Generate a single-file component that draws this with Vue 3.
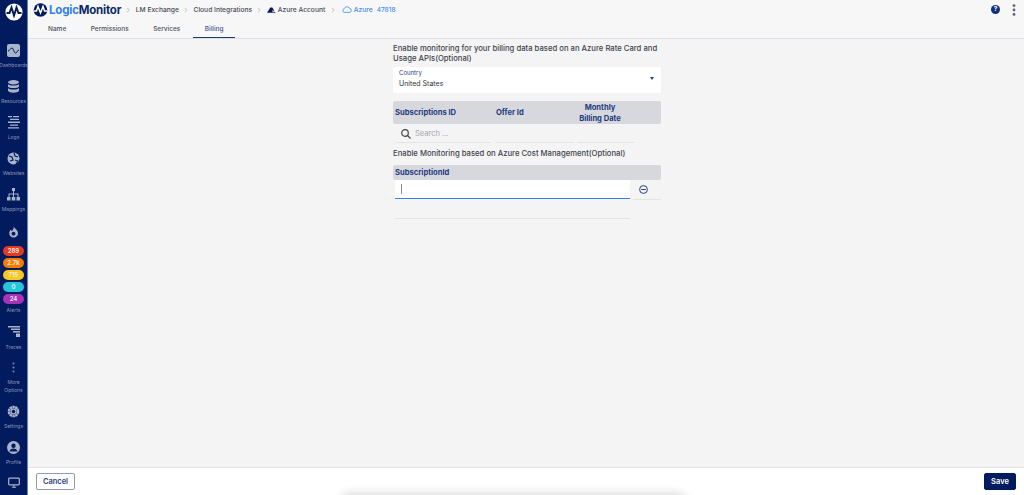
<template>
  <div class="app">
    <aside class="sidebar">
      <div class="side-logo">
        <svg width="18" height="18" viewBox="0 0 18 18">
          <circle cx="9" cy="9" r="8.600" fill="#fff" />
          <path d="M1.500 10h3l2-5.500 2.500 8 2.500-8 2 5.500h3" fill="none" stroke="#021b5e" stroke-width="2" />
        </svg>
      </div>
      <div class="side-items">
        <div class="side-item">
          <svg width="13" height="13" viewBox="0 0 13 13">
            <rect width="13" height="13" rx="2" fill="#aab3cc" />
            <path d="M1 7c2 0 2-3 4-3s1.500 5 3.500 5 1.500-3 3.500-3" fill="none" stroke="#021b5e" />
          </svg>
          <span>Dashboards</span>
        </div>
        <div class="side-item">
          <svg width="13" height="13" viewBox="0 0 13 13" fill="#aab3cc">
            <ellipse cx="6.500" cy="2.200" rx="5.500" ry="2.200" />
            <path d="M1 4c1 2 10 2 11 0v2.500c-1 2-10 2-11 0zM1 8c1 2 10 2 11 0v2.800c-1 2.600-10 2.600-11 0z" />
          </svg>
          <span>Resources</span>
        </div>
        <div class="side-item">
          <svg width="13" height="13" viewBox="0 0 13 13" fill="#aab3cc">
            <path d="M1 0h4v1.300H1zM6 0h6v1.300H6zM3 2.800h9v1.300H3zM1 5.600h12v1.300H1zM3 8.400h8v1.300H3zM1 11.200h11v1.300H1z" />
          </svg>
          <span>Logs</span>
        </div>
        <div class="side-item">
          <svg width="13" height="13" viewBox="0 0 13 13">
            <circle cx="6.500" cy="6.500" r="6" fill="#aab3cc" />
            <path d="M2 4l3 1 1 3-3 1M7 1l1 3 3 1M8 8l3 1-2 3" fill="none" stroke="#021b5e" stroke-width="1.200" />
          </svg>
          <span>Websites</span>
        </div>
        <div class="side-item">
          <svg width="13" height="13" viewBox="0 0 13 13" fill="#aab3cc">
            <path d="M5 0h3v3H5zM6 3h1v2.500h4.500V9h-1V6.500H7V9H6V6.500H2.500V9h-1V5.500H6z" />
            <path d="M0 9h3.500v3.500H0zM4.700 9h3.600v3.500H4.700zM9.500 9H13v3.500H9.500z" />
          </svg>
          <span>Mappings</span>
        </div>
        <div class="side-alerts">
          <svg width="9" height="12" viewBox="0 0 11 14">
            <path d="M6 0c0 3 5 4 5 8.500A5.300 5.300 0 0 1 .3 8.500C.3 6.500 1.500 5 2.500 4l.7 2C4.500 5 6 3 6 0z" fill="#aab3cc" />
            <circle cx="5.500" cy="9" r="2.400" fill="#021b5e" />
          </svg>
          <div class="badges">
            <span v-for="b in badges" :key="b.text" class="badge" :style="{ background: b.color }">{{ b.text }}</span>
          </div>
          <span>Alerts</span>
        </div>
        <div class="side-item traces">
          <svg width="13" height="11" viewBox="0 0 13 11" fill="#aab3cc">
            <path d="M1 0h12v1.500H1zM4 2.500h9V4H4zM6 5h7v1.500H6zM9 7.500h4V11H9z" />
          </svg>
          <span>Traces</span>
        </div>
        <div class="side-item more">
          <svg width="3" height="11" viewBox="0 0 3 11" fill="#7e8aaf">
            <circle cx="1.500" cy="1.500" r="1" />
            <circle cx="1.500" cy="5.500" r="1" />
            <circle cx="1.500" cy="9.500" r="1" />
          </svg>
          <span>More<br />Options</span>
        </div>
        <div class="side-item">
          <svg width="13" height="13" viewBox="0 0 13 13">
            <circle cx="6.500" cy="6.500" r="4.500" fill="none" stroke="#aab3cc" stroke-width="2.600" stroke-dasharray="2.400 .4" />
            <circle cx="6.500" cy="6.500" r="2.400" fill="none" stroke="#aab3cc" stroke-width="1.200" />
          </svg>
          <span>Settings</span>
        </div>
        <div class="side-item">
          <svg width="13" height="13" viewBox="0 0 13 13">
            <circle cx="6.500" cy="6.500" r="6.500" fill="#aab3cc" />
            <circle cx="6.500" cy="4.800" r="2.200" fill="#021b5e" />
            <path d="M2.500 10.500c.6-4 7.400-4 8 0z" fill="#021b5e" />
          </svg>
          <span>Profile</span>
        </div>
        <div class="side-item monitor">
          <svg width="12" height="11" viewBox="0 0 14 12" fill="none" stroke="#aab3cc">
            <rect x=".8" y=".8" width="12.400" height="8" rx="1" stroke-width="1.400" />
            <path d="M7 9v2M4.500 11.500h5" stroke-width="1.200" />
          </svg>
        </div>
      </div>
    </aside>

    <div class="main">
      <header class="crumbs">
        <div class="logo">
          <svg width="15" height="14" viewBox="0 0 15 14">
            <circle cx="7.500" cy="7" r="6.800" fill="#021b5e" />
            <path d="M1 8h2.500L5 3.500 7.500 10 10 3.500 11.500 8H14" fill="none" stroke="#fff" stroke-width="1.500" />
          </svg>
          <span class="logo-text"><b class="logo-logic">Logic</b><b class="logo-monitor">Monitor</b></span>
        </div>
        <span class="sep">›</span>
        <span class="crumb">LM Exchange</span>
        <span class="sep">›</span>
        <span class="crumb">Cloud Integrations</span>
        <span class="sep">›</span>
        <svg class="crumb-icon" width="9" height="6" viewBox="0 0 11 7">
          <path d="M0 7l4-6.500h2.500L9 4.500 6 4l1.500 3zM8 7l-1-1.500h2L11 7z" fill="#021b5e" />
        </svg>
        <span class="crumb">Azure Account</span>
        <span class="sep wide">›</span>
        <svg class="crumb-icon" width="10" height="7" viewBox="0 0 12 8">
          <path d="M3 7.500a2.300 2.300 0 0 1-.3-4.500 3.300 3.300 0 0 1 6-.6A2.600 2.600 0 0 1 9.200 7.500z" fill="none" stroke="#3d8bf2" />
        </svg>
        <span class="crumb azure">Azure</span>
        <span class="crumb azure num">47818</span>
        <div class="crumbs-right">
          <span class="help">?</span>
          <svg width="4" height="12" viewBox="0 0 4 12" fill="#5b6272">
            <circle cx="2" cy="1.600" r="1.400" />
            <circle cx="2" cy="6" r="1.400" />
            <circle cx="2" cy="10.400" r="1.400" />
          </svg>
        </div>
      </header>

      <nav class="tabs">
        <span v-for="t in tabs" :key="t" class="tab" :class="{ active: t === 'Billing' }">{{ t }}</span>
      </nav>

      <main class="content">
        <div class="form">
          <p class="heading">Enable monitoring for your billing data based on an Azure Rate Card and Usage APIs(Optional)</p>
          <div class="select">
            <div>
              <div class="select-label">Country</div>
              <div class="select-value">United States</div>
            </div>
            <span class="caret"></span>
          </div>

          <div class="table-head sub-head">
            <span class="col-sub">Subscriptions ID</span>
            <span class="col-offer">Offer Id</span>
            <span class="col-date">Monthly<br />Billing Date</span>
          </div>
          <div class="search-row">
            <div class="search-cell first">
              <svg width="10" height="10" viewBox="0 0 10 10" fill="none" stroke="#444" stroke-width="1.200">
                <circle cx="4" cy="4" r="3.300" />
                <path d="M6.500 6.500L9.500 9.500" />
              </svg>
              <span>Search ...</span>
            </div>
            <div class="search-cell second"></div>
            <div class="search-cell third"></div>
          </div>

          <p class="heading second-heading">Enable Monitoring based on Azure Cost Management(Optional)</p>

          <div class="table-head id-head">
            <span>SubscriptionId</span>
          </div>
          <div class="id-row">
            <div class="id-input"><span class="cursor"></span></div>
            <div class="id-action">
              <svg width="9" height="9" viewBox="0 0 9 9" fill="none" stroke="#23407f">
                <circle cx="4.500" cy="4.500" r="3.900" />
                <path d="M2.200 4.500h4.600" />
              </svg>
            </div>
          </div>
          <div class="id-blank"></div>
        </div>
      </main>

      <footer class="footer">
        <button class="btn cancel" type="button">Cancel</button>
        <button class="btn save" type="button">Save</button>
        <div class="dock-shadow"></div>
      </footer>
    </div>
  </div>
</template>

<script setup>
const tabs = ['Name', 'Permissions', 'Services', 'Billing']

const badges = [
  { text: '289', color: '#e2391f' },
  { text: '2.7k', color: '#f57c00' },
  { text: '715', color: '#f7c81e' },
  { text: '0', color: '#26c6da' },
  { text: '24', color: '#a832b8' },
]
</script>

<style>
html,
body {
  margin: 0;
  overflow: hidden;
}
</style>

<style scoped>
.app {
  width: 1024px;
  height: 495px;
  display: flex;
  overflow: hidden;
  background: #f4f4f4;
  font-family: Inter, "Liberation Sans", sans-serif;
  color: #3a3f4a;
}

.sidebar {
  width: 28px;
  flex: none;
  box-sizing: border-box;
  background: #021b5e;
  border-right: 1px solid #6f83b5;
  display: flex;
  flex-direction: column;
  align-items: center;
  color: #8a96b8;
}

.side-logo {
  height: 22px;
  padding-top: 1px;
  display: flex;
  align-items: center;
  justify-content: center;
}

.side-items {
  margin-top: 21px;
  width: 100%;
  display: flex;
  flex-direction: column;
  align-items: center;
}

.side-item,
.side-alerts {
  width: 100%;
  display: flex;
  flex-direction: column;
  align-items: center;
  font-size: 5px;
  line-height: 7px;
  text-align: center;
}

.side-item {
  height: 36px;
}

.side-item svg {
  margin-bottom: 5px;
}

.side-alerts {
  height: 102px;
  padding-top: 2px;
  box-sizing: border-box;
}

.badges {
  margin: 8px 0 3px;
  display: flex;
  flex-direction: column;
  gap: 2px;
}

.badge {
  width: 21px;
  height: 10px;
  border-radius: 5px;
  color: #eee;
  font-size: 6px;
  font-weight: 600;
  line-height: 10px;
  text-align: center;
}

.side-item.traces svg {
  margin-bottom: 7px;
}

.more {
  height: 43px;
}

.more span {
  line-height: 8px;
}

.monitor {
  height: 17px;
}

.main {
  flex: 1;
  min-width: 0;
  display: flex;
  flex-direction: column;
}

.crumbs {
  height: 19px;
  flex: none;
  background: #f7f7f7;
  display: flex;
  align-items: center;
  padding: 0 8px 0 5px;
  font-size: 6.700px;
  font-weight: 500;
}

.logo {
  display: flex;
  align-items: center;
  gap: 1px;
}

.logo-text {
  font-size: 11.500px;
  letter-spacing: -0.200px;
}

.logo-logic {
  color: #2f80ed;
}

.logo-monitor {
  color: #0e2a66;
}

.sep {
  margin: 0 6px 0 5px;
  color: #c9c9c9;
  font-size: 9px;
}

.sep.wide {
  margin: 0 7px 0 6px;
}

.crumb-icon {
  margin-right: 2px;
}

.crumb {
  color: #444a55;
  white-space: nowrap;
}

.azure {
  color: #3d8bf2;
}

.num {
  margin-left: 4px;
  font-size: 6.500px;
}

.crumbs-right {
  margin-left: auto;
  display: flex;
  align-items: center;
  gap: 12px;
}

.help {
  width: 9px;
  height: 9px;
  border-radius: 50%;
  background: #0f2f7c;
  color: #fff;
  font-size: 6.500px;
  font-weight: 700;
  line-height: 9px;
  text-align: center;
}

.tabs {
  height: 19px;
  flex: none;
  background: #f7f7f7;
  border-bottom: 1px solid #dcdfe8;
  display: flex;
  padding-left: 8px;
  font-size: 6.500px;
  font-weight: 500;
}

.tab {
  padding: 0 12px;
  margin-right: 0.500px;
  line-height: 20px;
  height: 19px;
  box-sizing: border-box;
  color: #4a4f5a;
}

.tab.active {
  color: #3f5597;
  border-bottom: 1px solid #22376f;
}

.content {
  flex: 1;
  min-height: 0;
  padding: 5px 0 0 365px;
}

.form {
  width: 268px;
}

.heading {
  margin: 0;
  font-size: 7.700px;
  font-weight: 500;
  line-height: 9.500px;
  color: #3e434d;
}

.select {
  margin-top: 4px;
  height: 26px;
  padding: 0 7px 3px 6px;
  box-sizing: border-box;
  background: #fff;
  border-radius: 2px;
  display: flex;
  align-items: center;
  justify-content: space-between;
}

.select-label {
  font-size: 6px;
  line-height: 10px;
  color: #27408a;
}

.select-value {
  font-size: 7px;
  line-height: 11px;
  color: #333;
}

.caret {
  width: 0;
  height: 0;
  border-left: 2.500px solid transparent;
  border-right: 2.500px solid transparent;
  border-top: 3px solid #27408a;
}

.table-head {
  background: #d6d8dd;
  border-radius: 2px;
  font-size: 7.600px;
  font-weight: 700;
  color: #233a80;
  display: flex;
  align-items: center;
}

.sub-head {
  margin-top: 8px;
  height: 23px;
  line-height: 11px;
}

.col-sub {
  width: 101px;
  padding-left: 2px;
  box-sizing: border-box;
}

.col-offer {
  width: 81px;
  padding-left: 2px;
  box-sizing: border-box;
}

.col-date {
  width: 50px;
  text-align: center;
}

.search-row {
  height: 19px;
  display: flex;
}

.search-cell {
  height: 19px;
  box-sizing: border-box;
  border-bottom: 1px solid #e4e4e4;
}

.first {
  width: 95px;
  margin-left: 3px;
  padding: 1px 0 0 5px;
  display: flex;
  align-items: center;
  gap: 4px;
  font-size: 7.500px;
  color: #a4a6ab;
}

.second {
  width: 78px;
  margin-left: 5px;
}

.third {
  width: 57px;
  margin-left: 3px;
}

.second-heading {
  margin-top: 6px;
}

.id-head {
  margin-top: 6px;
  height: 15px;
}

.id-head span {
  padding-left: 2px;
}

.id-row {
  display: flex;
  height: 20px;
}

.id-input {
  width: 235px;
  height: 19px;
  margin-left: 2px;
  padding-left: 6px;
  box-sizing: border-box;
  background: #fff;
  border-bottom: 1px solid #2f80f0;
  display: flex;
  align-items: center;
}

.cursor {
  width: 1px;
  height: 10px;
  background: #8a8a8a;
}

.id-action {
  width: 28px;
  height: 20px;
  margin-left: 3px;
  padding-left: 6px;
  box-sizing: border-box;
  border-bottom: 1px solid #e4e4e4;
  display: flex;
  align-items: center;
}

.id-blank {
  width: 235px;
  height: 19px;
  margin-left: 2px;
  box-sizing: border-box;
  border-bottom: 1px solid #e4e4e4;
}

.footer {
  height: 27px;
  flex: none;
  position: relative;
  overflow: hidden;
  background: #fff;
  border-top: 1px solid #e2e2e2;
  display: flex;
  align-items: center;
  justify-content: space-between;
  padding: 0 8px;
}

.btn {
  position: relative;
  z-index: 1;
  height: 17px;
  border-radius: 2px;
  font-family: inherit;
  font-size: 7.500px;
  font-weight: 600;
  padding: 0;
}

.cancel {
  width: 39px;
  background: #fff;
  border: 1px solid #8c9ac0;
  color: #2c4180;
}

.save {
  width: 32px;
  background: #021b5e;
  border: 1px solid #021b5e;
  color: #fff;
}

.dock-shadow {
  position: absolute;
  left: 315px;
  bottom: -14px;
  width: 340px;
  height: 12px;
  border-radius: 8px;
  background: #bbb;
  box-shadow: 0 0 10px 4px rgba(0, 0, 0, 0.15);
}
</style>
